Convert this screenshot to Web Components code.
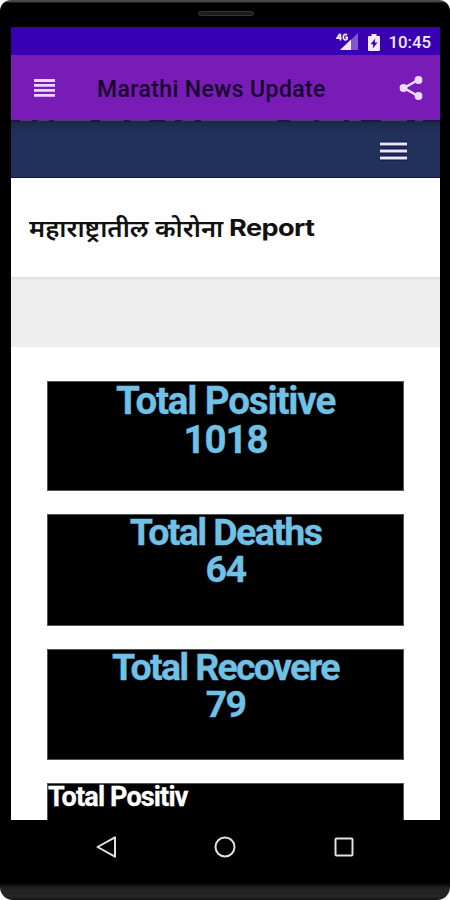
<!DOCTYPE html>
<html lang="mr">
<head>
<meta charset="UTF-8">
<meta name="viewport" content="width=device-width, initial-scale=1.0">
<title>Marathi News Update</title>
<style>
    html, body {
        margin: 0;
        background: #fff;
        font-family: Roboto, "Noto Sans", sans-serif;
        overflow: hidden;
    }
</style>
</head>
<body>
<phone-frame>
    <status-bar slot="screen">10:45</status-bar>
    <app-bar slot="screen">Marathi News Update</app-bar>
    <site-nav slot="screen"></site-nav>
    <page-title slot="screen">महाराष्ट्रातील कोरोना<span slot="latin">Report</span></page-title>
    <ad-space slot="screen"></ad-space>
    <stat-list slot="screen">
        <stat-card style="--card-height: 110px">Total Positive<span slot="value">1018</span></stat-card>
        <stat-card style="--card-height: 112px; --size: 37.5px; --track: -1.6px; --line: 37px">Total Deaths<span slot="value">64</span></stat-card>
        <stat-card style="--card-height: 111px; --size: 37.5px; --track: -1.7px; --line: 37px">Total Recovere<span slot="value">79</span></stat-card>
        <stat-card compact>Total Positiv</stat-card>
    </stat-list>
    <android-nav slot="keys"></android-nav>
</phone-frame>

<script>
/**
 * PhoneFrame Component
 * Device body with the speaker, the screen area and the soft keys.
 */
class PhoneFrame extends HTMLElement {
    constructor() {
        super();
        this.attachShadow({ mode: "open" });
    }

    connectedCallback() {
        this.shadowRoot.innerHTML = `
            <style>
                :host {
                    display: flex;
                    flex-direction: column;
                    box-sizing: border-box;
                    width: 450px;
                    height: 900px;
                    padding: 0 10px 0 11px;
                    border-radius: 11px 11px 13px 13px;
                    background:
                        linear-gradient(#4b4b4b, #4b4b4b 1px, #3c3c3c 2px, #000 3px) top / 100% 3px no-repeat,
                        linear-gradient(#000, #171717 3px, #232323 6px, #252525 14px, #101010) bottom / 100% 17px no-repeat,
                        #000;
                }
                .top {
                    flex: 0 0 27px;
                    display: flex;
                    justify-content: center;
                    align-items: center;
                }
                .speaker {
                    box-sizing: border-box;
                    width: 56px;
                    height: 5px;
                    border: 1px solid #343434;
                    border-radius: 3px;
                    background: #1c1c1c;
                }
                .screen {
                    flex: 0 0 793px;
                    display: flex;
                    flex-direction: column;
                    overflow: hidden;
                    background: #fff;
                }
            </style>
            <div class="top"><div class="speaker"></div></div>
            <div class="screen"><slot name="screen"></slot></div>
            <slot name="keys"></slot>
        `;
    }
}

/**
 * StatusBar Component
 * Signal, battery and clock.
 */
class StatusBar extends HTMLElement {
    constructor() {
        super();
        this.attachShadow({ mode: "open" });
    }

    connectedCallback() {
        this.shadowRoot.innerHTML = `
            <style>
                :host {
                    flex: 0 0 28px;
                    display: flex;
                    justify-content: flex-end;
                    align-items: center;
                    box-sizing: border-box;
                    padding: 2px 9px 0 0;
                    background: #3900b3;
                    color: #f1eaff;
                    font-size: 16.8px;
                    font-weight: 500;
                }
                svg { display: block; }
                .signal { margin-right: 9px; }
                .battery { margin-right: 8px; }
            </style>
            <svg class="signal" width="23" height="18" viewBox="0 0 23 18">
                <path d="M4 17 22 0V17Z" fill="#8057d1"/>
                <path d="M4 17 15 6.6V17Z" fill="#f1eaff"/>
                <path d="M0 0H13V7.800H5L0 6Z" fill="#3900b3"/>
                <path d="M4 .8 1 5.200H5.600M4.400 .8V7.500M11 2.200C9.500 .7 7.300 1.300 7.300 4.200S9.500 7.700 11.200 6V4.300H9.200" fill="none" stroke="#f1eaff" stroke-width="1.700"/>
            </svg>
            <svg class="battery" width="12" height="17" viewBox="0 0 12 17">
                <path d="M3.500 0h5v2H11a1 1 0 0 1 1 1v13a1 1 0 0 1-1 1H1a1 1 0 0 1-1-1V3a1 1 0 0 1 1-1h2.500Z" fill="#f1eaff"/>
                <path d="M7.200 4.500 2.600 10.300H5.300L4.800 14.500 9.500 8.600H6.700Z" fill="#3900b3"/>
            </svg>
            <slot></slot>
        `;
    }
}

/**
 * AppBar Component
 * Menu button, app name and share button.
 */
class AppBar extends HTMLElement {
    constructor() {
        super();
        this.attachShadow({ mode: "open" });
    }

    connectedCallback() {
        this.shadowRoot.innerHTML = `
            <style>
                :host {
                    flex: 0 0 65px;
                    display: flex;
                    align-items: center;
                    box-sizing: border-box;
                    padding: 0 17px 0 23px;
                    background: #791bb7;
                    color: #17022b;
                }
                .name {
                    flex: 1;
                    margin-left: 42px;
                    padding-top: 3px;
                    font-size: 23px;
                    font-weight: 500;
                    letter-spacing: 0.4px;
                    white-space: nowrap;
                }
                svg { display: block; }
            </style>
            <svg width="21" height="18" viewBox="0 0 21 18">
                <path d="M0 1.500H21M0 6.300H21M0 11.400H21M0 16.300H21" stroke="#ecd9fa" stroke-width="2.800"/>
            </svg>
            <div class="name"><slot></slot></div>
            <svg width="24" height="24" viewBox="0 0 24 24">
                <path d="M19 4 5 12 19 20" fill="none" stroke="#ecdcf8" stroke-width="2.500"/>
                <g fill="#ecdcf8"><circle cx="19.500" cy="4" r="3.900"/><circle cx="4.500" cy="12" r="3.900"/><circle cx="19.500" cy="20" r="3.900"/></g>
            </svg>
        `;
    }
}

/**
 * SiteNav Component
 * Navy strip of the web page with its burger menu.
 */
class SiteNav extends HTMLElement {
    constructor() {
        super();
        this.attachShadow({ mode: "open" });
    }

    connectedCallback() {
        this.shadowRoot.innerHTML = `
            <style>
                :host {
                    flex: 0 0 58px;
                    display: flex;
                    flex-direction: column;
                    box-sizing: border-box;
                    border-bottom: 1px solid #150b45;
                    background: linear-gradient(#1c2745, #22305c 12px);
                }
                .edge { display: block; flex: none; }
                .bar {
                    flex: 1;
                    display: flex;
                    justify-content: flex-end;
                    align-items: center;
                    padding: 3px 33px 0 0;
                }
            </style>
            <svg class="edge" width="429" height="2" viewBox="0 0 429 2">
                <path d="M0 .5H429" stroke="#4f3a68"/>
                <path d="M0 1H9M21 1H27M38 1H43M80 1H89M113 1H119M139 1H154M164 1H171M184 1H190M267 1H279M303 1H308M333 1H338M350 1H370M396 1H404M412 1H429" stroke="#221743" stroke-width="2"/>
            </svg>
            <div class="bar">
                <svg width="27" height="20" viewBox="0 0 27 20">
                    <path d="M0 3H27M0 10H27M0 17H27" stroke="#10084e" stroke-width="5"/>
                    <path d="M0 3H27M0 10H27M0 17H27" stroke="#e9e9f6" stroke-width="3"/>
                </svg>
            </div>
        `;
    }
}

/**
 * PageTitle Component
 * Heading of the report, with a slot for its Latin word.
 */
class PageTitle extends HTMLElement {
    constructor() {
        super();
        this.attachShadow({ mode: "open" });
    }

    connectedCallback() {
        this.shadowRoot.innerHTML = `
            <style>
                :host {
                    flex: 0 0 100px;
                    display: flex;
                    align-items: center;
                    box-sizing: border-box;
                    padding-left: 18px;
                    border-bottom: 1px solid #dedede;
                    background: #fff;
                    color: #111;
                    font-size: 24px;
                    font-weight: 600;
                    white-space: nowrap;
                }
                .local {
                    flex: 0 0 200px;
                    transform: scaleX(1.065);
                    transform-origin: left;
                }
                .latin {
                    font-family: Inter, sans-serif;
                    font-size: 23px;
                    font-weight: 700;
                    padding-top: 1px;
                    letter-spacing: -0.5px;
                    transform: scaleX(1.18);
                    transform-origin: left;
                }
            </style>
            <div class="local"><slot></slot></div>
            <div class="latin"><slot name="latin"></slot></div>
        `;
    }
}

/**
 * AdSpace Component
 * Empty grey band under the heading.
 */
class AdSpace extends HTMLElement {
    constructor() {
        super();
        this.attachShadow({ mode: "open" });
    }

    connectedCallback() {
        this.shadowRoot.innerHTML = `
            <style>
                :host {
                    flex: 0 0 69px;
                    display: block;
                    background: linear-gradient(#e4e4e4, #eee 3px);
                }
            </style>
        `;
    }
}

/**
 * StatList Component
 * Column that spaces the stat cards.
 */
class StatList extends HTMLElement {
    constructor() {
        super();
        this.attachShadow({ mode: "open" });
    }

    connectedCallback() {
        this.shadowRoot.innerHTML = `
            <style>
                :host {
                    flex: none;
                    display: flex;
                    flex-direction: column;
                    gap: 23px;
                    padding: 34px 36px 0;
                }
            </style>
            <slot></slot>
        `;
    }
}

/**
 * StatCard Component
 * Black box with a label and a number. "compact" is the small white variant.
 */
class StatCard extends HTMLElement {
    constructor() {
        super();
        this.attachShadow({ mode: "open" });
    }

    connectedCallback() {
        this.shadowRoot.innerHTML = `
            <style>
                :host {
                    display: block;
                    box-sizing: border-box;
                    height: var(--card-height, 110px);
                    border: 1px solid #555;
                    background: #000;
                    color: #6fc1e6;
                    font-size: var(--size, 38.5px);
                    font-weight: 700;
                    line-height: var(--line, 39px);
                    letter-spacing: var(--track, -1.15px);
                    text-align: center;
                    white-space: nowrap;
                    -webkit-text-stroke: 0.3px currentColor;
                }
                :host([compact]) {
                    color: #fff;
                    font-size: 27px;
                    line-height: 27px;
                    letter-spacing: -0.85px;
                    text-align: left;
                }
                .label { margin-top: -1px; }
                :host([compact]) .label { margin-top: 0; }
            </style>
            <div class="label"><slot></slot></div>
            <div class="value"><slot name="value"></slot></div>
        `;
    }
}

/**
 * AndroidNav Component
 * Back, home and recents keys.
 */
class AndroidNav extends HTMLElement {
    constructor() {
        super();
        this.attachShadow({ mode: "open" });
    }

    connectedCallback() {
        this.shadowRoot.innerHTML = `
            <style>
                :host {
                    flex: 0 0 54px;
                    display: flex;
                    justify-content: space-between;
                    align-items: center;
                    padding: 0 84px 0 83px;
                }
                svg { display: block; fill: none; stroke: #e2e2e2; stroke-width: 2; }
            </style>
            <svg width="24" height="24" viewBox="0 0 24 24"><path d="M3.500 12 21 2.300V21.700Z" stroke-linejoin="round"/></svg>
            <svg width="24" height="24" viewBox="0 0 24 24"><circle cx="12" cy="12" r="9.500"/></svg>
            <svg width="24" height="24" viewBox="0 0 24 24"><rect x="3.500" y="3.500" width="17" height="17" rx="1"/></svg>
        `;
    }
}

customElements.define("phone-frame", PhoneFrame);
customElements.define("status-bar", StatusBar);
customElements.define("app-bar", AppBar);
customElements.define("site-nav", SiteNav);
customElements.define("page-title", PageTitle);
customElements.define("ad-space", AdSpace);
customElements.define("stat-list", StatList);
customElements.define("stat-card", StatCard);
customElements.define("android-nav", AndroidNav);
</script>
</body>
</html>
